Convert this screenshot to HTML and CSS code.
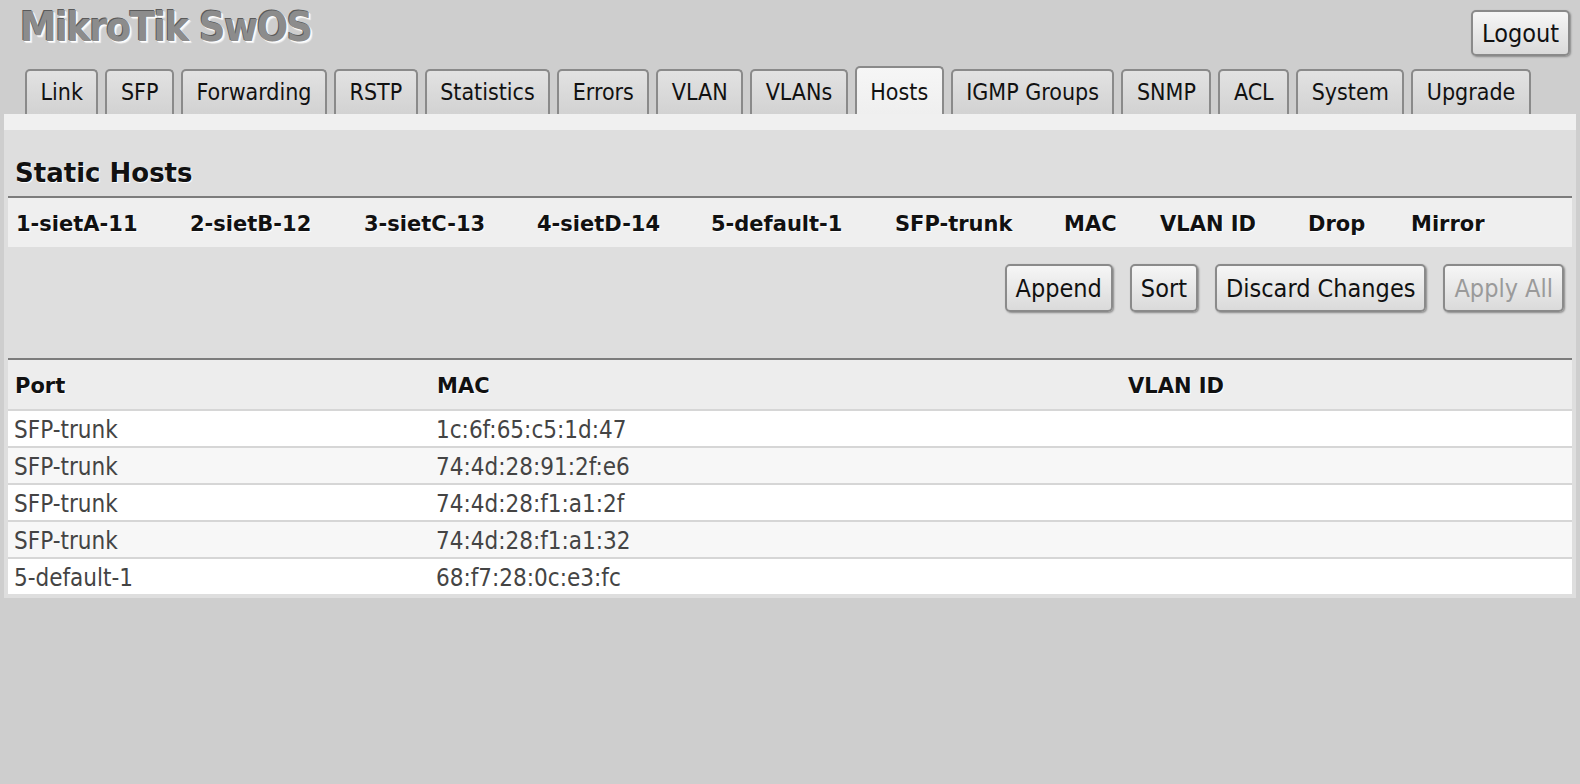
FILE: index.html
```html
<!DOCTYPE html>
<html lang="en">
<head>
    <meta charset="UTF-8">
    <title>MikroTik SwOS</title>
    <link rel="stylesheet" href="styles.css">
</head>
<body>
    <div class="header">
        <h1 class="logo">MikroTik SwOS</h1>
        <button class="btn logout">Logout</button>
    </div>

    <div class="tabs">
        <div class="tab">Link</div>
        <div class="tab">SFP</div>
        <div class="tab">Forwarding</div>
        <div class="tab">RSTP</div>
        <div class="tab">Statistics</div>
        <div class="tab">Errors</div>
        <div class="tab">VLAN</div>
        <div class="tab">VLANs</div>
        <div class="tab active">Hosts</div>
        <div class="tab">IGMP Groups</div>
        <div class="tab">SNMP</div>
        <div class="tab">ACL</div>
        <div class="tab">System</div>
        <div class="tab">Upgrade</div>
    </div>

    <div class="panel">
        <div class="strip"></div>
        <div class="content">
            <h2 class="title">Static Hosts</h2>

            <div class="host-head">
                <span class="c1">1-sietA-11</span>
                <span class="c2">2-sietB-12</span>
                <span class="c3">3-sietC-13</span>
                <span class="c4">4-sietD-14</span>
                <span class="c5">5-default-1</span>
                <span class="c6">SFP-trunk</span>
                <span class="c7">MAC</span>
                <span class="c8">VLAN ID</span>
                <span class="c9">Drop</span>
                <span class="c10">Mirror</span>
            </div>

            <div class="actions">
                <button class="btn">Append</button>
                <button class="btn">Sort</button>
                <button class="btn">Discard Changes</button>
                <button class="btn disabled">Apply All</button>
            </div>

            <table class="hosts">
                <thead>
                    <tr>
                        <th class="col-port">Port</th>
                        <th class="col-mac">MAC</th>
                        <th>VLAN ID</th>
                    </tr>
                </thead>
                <tbody>
                    <tr><td>SFP-trunk</td><td>1c:6f:65:c5:1d:47</td><td></td></tr>
                    <tr><td>SFP-trunk</td><td>74:4d:28:91:2f:e6</td><td></td></tr>
                    <tr><td>SFP-trunk</td><td>74:4d:28:f1:a1:2f</td><td></td></tr>
                    <tr><td>SFP-trunk</td><td>74:4d:28:f1:a1:32</td><td></td></tr>
                    <tr><td>5-default-1</td><td>68:f7:28:0c:e3:fc</td><td></td></tr>
                </tbody>
            </table>
        </div>
    </div>
</body>
</html>
```

FILE: styles.css
```css
body {
    margin: 0;
    padding: 0 4px;
    background: #cecece;
    font-family: "DejaVu Sans Condensed", "DejaVu Sans", sans-serif;
    font-size: 23px;
    color: #111;
}

.header {
    display: flex;
    justify-content: space-between;
    align-items: flex-start;
    height: 64px;
}
.logo {
    margin: 0;
    padding: 7px 0 0 16px;
    font-size: 41px;
    line-height: 41px;
    font-weight: bold;
    letter-spacing: -1.5px;
    color: #8c8c8c;
    text-shadow: -1px -1px 0 #5a5a5a, 1px 1px 0 #fff, 2px 2px 1px #f4f4f4;
}

.btn {
    font-family: inherit;
    font-size: 25px;
    color: #111;
    height: 48px;
    padding: 0 9px;
    border: 2px solid #8a8a8a;
    border-radius: 5px;
    background: linear-gradient(#f6f6f6, #dadada);
    box-shadow: 1px 1px 2px #8a8a8a;
}
.btn.disabled {
    color: #9a9a9a;
}
.logout {
    margin: 10px 6px 0 0;
    height: 46px;
}

.tabs {
    display: flex;
    align-items: flex-end;
    gap: 7px;
    height: 50px;
    padding-left: 21px;
}
.tab {
    height: 43px;
    line-height: 43px;
    padding: 0 13.5px;
    border: 2px solid #8a8a8a;
    border-bottom: none;
    border-radius: 5px 5px 0 0;
    background: linear-gradient(#e2e2e2, #d2d2d2);
}
.tab.active {
    height: 46px;
    line-height: 48px;
    background: linear-gradient(#f6f6f6, #efefef);
}

.panel {
    background: #dedede;
    padding-bottom: 4px;
}
.strip {
    height: 16px;
    background: #f0f0f0;
}
.content {
    padding: 0 4px;
}

.title {
    margin: 0;
    padding: 28px 0 8px 7px;
    font-family: "DejaVu Sans", sans-serif;
    font-size: 26px;
    line-height: 30px;
    border-bottom: 2px solid #7c7c7c;
    text-shadow: 1px 1px 1px #fff;
}

.host-head {
    display: flex;
    height: 49px;
    line-height: 53px;
    padding-left: 8px;
    background: #efefef;
    font-family: "DejaVu Sans", sans-serif;
    font-size: 21px;
    font-weight: bold;
    white-space: nowrap;
    text-shadow: 1px 1px 1px #fff;
}
.host-head .c1 { width: 174px; }
.host-head .c2 { width: 174px; }
.host-head .c3 { width: 173px; }
.host-head .c4 { width: 174px; }
.host-head .c5 { width: 184px; }
.host-head .c6 { width: 169px; }
.host-head .c7 { width: 96px; }
.host-head .c8 { width: 148px; }
.host-head .c9 { width: 103px; }

.actions {
    display: flex;
    justify-content: flex-end;
    gap: 17px;
    padding: 17px 8px 46px 0;
    border-bottom: 2px solid #7c7c7c;
}

.hosts {
    width: 100%;
    border-collapse: collapse;
}
.hosts th {
    height: 46px;
    padding: 3px 0 0 7px;
    text-align: left;
    background: #ededed;
    font-family: "DejaVu Sans", sans-serif;
    font-size: 21px;
    text-shadow: 1px 1px 1px #fff;
}
.hosts .col-port { width: 415px; }
.hosts .col-mac { width: 684px; }
.hosts td {
    height: 33px;
    padding: 2px 0 0 6px;
    border-top: 2px solid #d6d6d6;
    background: #fff;
    color: #444;
    font-size: 24px;
    line-height: 30px;
}
.hosts tr:nth-child(even) td {
    background: #f7f7f7;
}
```
